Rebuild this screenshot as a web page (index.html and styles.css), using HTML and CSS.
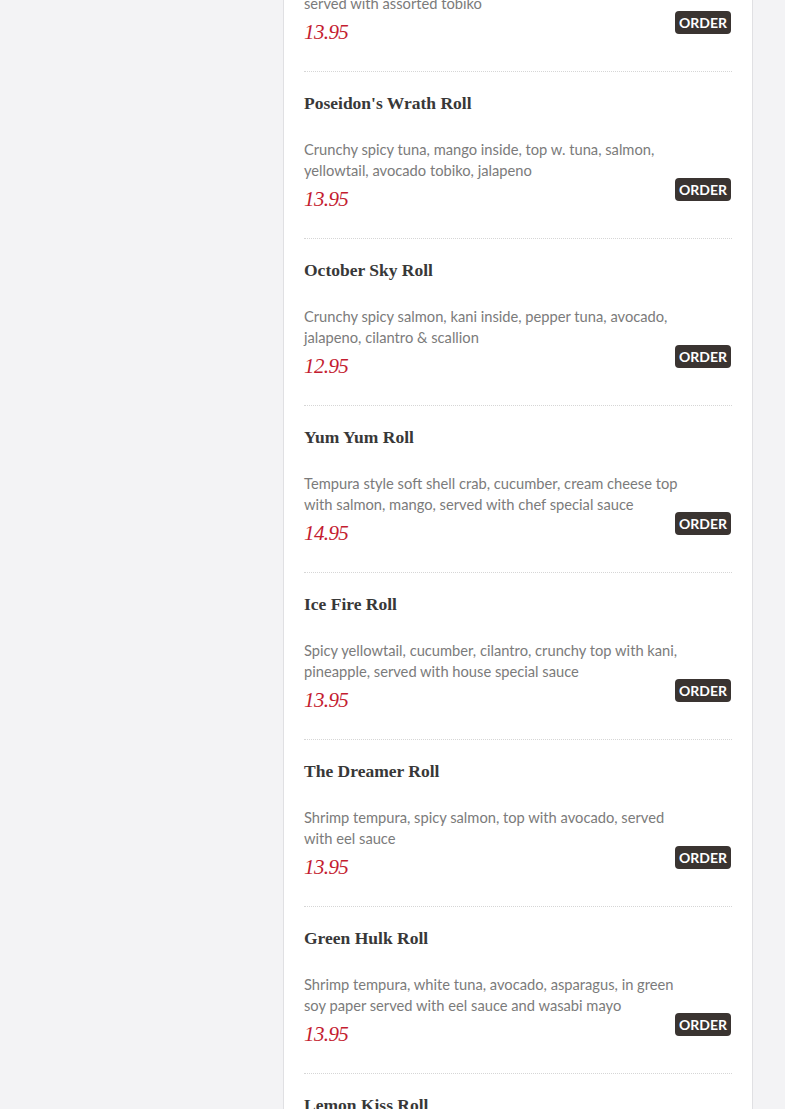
FILE: index.html
```html
<!DOCTYPE html>
<html>
<head>
<meta charset="utf-8">
<link rel="stylesheet" href="styles.css">
</head>
<body>
<div class="page">
  <main class="panel">
    <div class="list">
      <article class="item">
        <h3 class="name">Tobiko Dream Roll</h3>
        <p class="desc">Spicy crab, avocado, cucumber,<br>served with assorted tobiko</p>
        <div class="price">13.95</div>
        <button class="order">ORDER</button>
      </article>
      <article class="item">
        <h3 class="name">Poseidon's Wrath Roll</h3>
        <p class="desc">Crunchy spicy tuna, mango inside, top w. tuna, salmon, yellowtail, avocado tobiko, jalapeno</p>
        <div class="price">13.95</div>
        <button class="order">ORDER</button>
      </article>
      <article class="item">
        <h3 class="name">October Sky Roll</h3>
        <p class="desc">Crunchy spicy salmon, kani inside, pepper tuna, avocado, jalapeno, cilantro &amp; scallion</p>
        <div class="price">12.95</div>
        <button class="order">ORDER</button>
      </article>
      <article class="item">
        <h3 class="name">Yum Yum Roll</h3>
        <p class="desc">Tempura style soft shell crab, cucumber, cream cheese top with salmon, mango, served with chef special sauce</p>
        <div class="price">14.95</div>
        <button class="order">ORDER</button>
      </article>
      <article class="item">
        <h3 class="name">Ice Fire Roll</h3>
        <p class="desc">Spicy yellowtail, cucumber, cilantro, crunchy top with kani, pineapple, served with house special sauce</p>
        <div class="price">13.95</div>
        <button class="order">ORDER</button>
      </article>
      <article class="item">
        <h3 class="name">The Dreamer Roll</h3>
        <p class="desc">Shrimp tempura, spicy salmon, top with avocado, served with eel sauce</p>
        <div class="price">13.95</div>
        <button class="order">ORDER</button>
      </article>
      <article class="item">
        <h3 class="name">Green Hulk Roll</h3>
        <p class="desc">Shrimp tempura, white tuna, avocado, asparagus, in green soy paper served with eel sauce and wasabi mayo</p>
        <div class="price">13.95</div>
        <button class="order">ORDER</button>
      </article>
      <article class="item">
        <h3 class="name">Lemon Kiss Roll</h3>
        <p class="desc">Spicy tuna, cucumber inside, top with salmon, lemon slice, served with ponzu sauce</p>
        <div class="price">13.95</div>
        <button class="order">ORDER</button>
      </article>
    </div>
  </main>
</div>
</body>
</html>
```

FILE: styles.css
```css
html, body {
  margin: 0;
  padding: 0;
  background: #f3f3f5;
  height: 100%;
  overflow: hidden;
}

.page {
  padding-left: 283px;
}

.panel {
  width: 428px;
  padding: 0 20px;
  background: #ffffff;
  border-left: 1px solid #e0e0e3;
  border-right: 1px solid #e0e0e3;
  min-height: 1300px;
  margin-top: -95px;
}

.item {
  display: grid;
  grid-template-columns: 1fr auto;
  padding: 19px 0 27px;
  border-bottom: 1px dotted #d6d6d6;
}

.name {
  grid-column: 1 / -1;
  grid-row: 1;
  margin: 0 0 24px;
  font-family: "Liberation Serif", serif;
  font-weight: bold;
  font-size: 17.5px;
  line-height: 24px;
  color: #383838;
}

.desc {
  grid-column: 1 / -1;
  grid-row: 2;
  margin: 0;
  padding-right: 40px;
  font-family: Lato, "Liberation Sans", sans-serif;
  font-size: 14.7px;
  line-height: 21px;
  color: #7b7b7b;
}

.price {
  grid-column: 1;
  grid-row: 3;
  margin-top: 6px;
  font-family: "Liberation Serif", serif;
  font-style: italic;
  font-size: 21px;
  line-height: 24px;
  color: #c41c30;
  letter-spacing: -0.6px;
}

.order {
  grid-column: 2;
  grid-row: 2 / 4;
  align-self: end;
  margin: 0 1px 10px 0;
  height: 23px;
  padding: 0 4px;
  border: none;
  border-radius: 4px;
  background: #3a3431;
  color: #ffffff;
  font-family: Lato, "Liberation Sans", sans-serif;
  font-weight: bold;
  font-size: 14px;
  line-height: 23px;
  cursor: pointer;
}
```
